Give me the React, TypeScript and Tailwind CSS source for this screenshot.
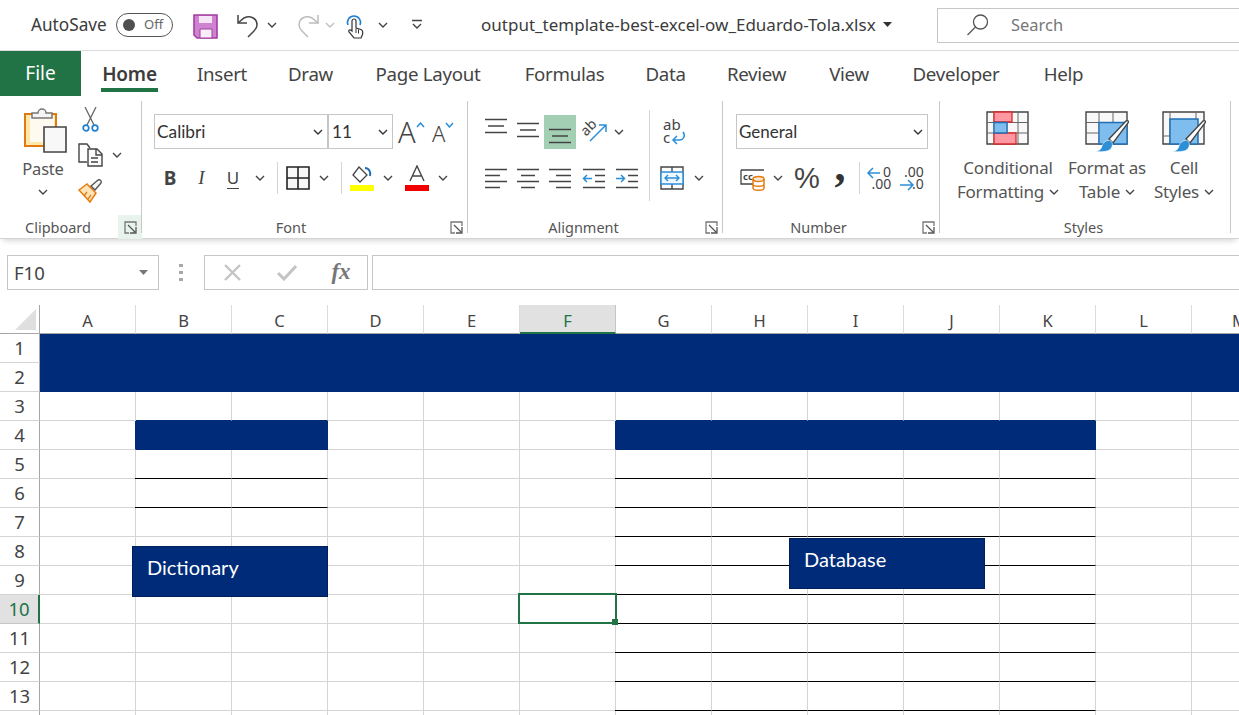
import React from "react";

const UI = { fontFamily: '"Noto Sans", "Open Sans", sans-serif' };
const NAVY = "bg-[#002b78]";

function Chev({ c = "#444", s = 10 }: { c?: string; s?: number }) {
  return (
    <svg width={s} height={s} viewBox="0 0 10 10" className="shrink-0">
      <path d="M1 3l4 4 4-4" fill="none" stroke={c} strokeWidth="1.4" />
    </svg>
  );
}

function Slot({ w, children }: { w: number; children?: React.ReactNode }) {
  return (
    <div className="flex h-full shrink-0 items-center justify-center" style={{ width: w }}>
      {children}
    </div>
  );
}

function Launcher({ hl }: { hl?: boolean }) {
  return (
    <div className={`absolute bottom-[-1px] right-0 flex h-[24px] w-[24px] items-center justify-center ${hl ? "bg-[#e8f3ed]" : ""}`}>
      <svg width="13" height="13" viewBox="0 0 13 13" fill="none" stroke="#555" strokeWidth="1.3">
        <path d="M12 5V1H1v11h4" stroke="#777" />
        <path d="M4 4l7 7M12 6v6H6" />
      </svg>
    </div>
  );
}

function Group({ w, label, launcher, hl, children, labelOffset = 0 }: { w: number; label: string; launcher?: boolean; hl?: boolean; children: React.ReactNode; labelOffset?: number }) {
  return (
    <section className="relative flex h-full shrink-0 flex-col" style={{ width: w }}>
      <div className="flex-1">{children}</div>
      <div className="flex h-[20px] items-center justify-center text-[14.5px] text-[#555]" style={{ paddingRight: labelOffset }}>
        {label}
      </div>
      {launcher && <Launcher hl={hl} />}
      <div className="absolute bottom-[5px] right-0 top-[5px] w-px bg-[#c8c8c8]" />
    </section>
  );
}

function HAlign({ kind }: { kind: "l" | "c" | "r" }) {
  const d =
    kind === "l"
      ? "M1 3.5H23M1 9.5H16M1 15.5H23M1 21.5H16"
      : kind === "c"
      ? "M1 3.5H23M5 9.5H19M1 15.5H23M5 21.5H19"
      : "M1 3.5H23M8 9.5H23M1 15.5H23M8 21.5H23";
  return (
    <svg width="24" height="24" viewBox="0 0 24 24" fill="none" stroke="#444" strokeWidth="1.3">
      <path d={d} />
    </svg>
  );
}

function VAlign({ top }: { top: number }) {
  return (
    <svg width="24" height="30" viewBox="0 0 24 30" fill="none" stroke="#444" strokeWidth="1.4">
      <path d={`M1 ${top + 0.5}H23M4 ${top + 7}H20M1 ${top + 13.5}H23`} />
    </svg>
  );
}

function Indent({ dir }: { dir: "in" | "out" }) {
  return (
    <svg width="24" height="24" viewBox="0 0 24 24" fill="none" strokeWidth="1.3">
      <path d="M1 3.5H23M1 21.5H23" stroke="#444" />
      <path d="M13 9.5H23M13 15.5H23" stroke="#444" />
      {dir === "out" ? (
        <path d="M10 12.5H1.5M5 9l-3.5 3.5L5 16" stroke="#2b8fd8" strokeWidth="1.5" />
      ) : (
        <path d="M1 12.5H9.5M6 9l3.5 3.5L6 16" stroke="#2b8fd8" strokeWidth="1.5" />
      )}
    </svg>
  );
}

function TopBar() {
  return (
    <header className="flex h-[51px] items-center border-b border-[#dcdcdc] bg-white pl-[31px] text-[17.2px] text-[#3b3b3b] [&>*]:shrink-0">
      <span className="w-[85px]">AutoSave</span>
      <div className="flex h-[24px] w-[57px] items-center rounded-full border border-[#555] pl-[6px]">
        <span className="h-[12px] w-[12px] rounded-full bg-[#505050]" />
        <span className="ml-[9px] text-[13px] text-[#666]">Off</span>
      </div>
      <svg className="ml-[20px] mt-[3px]" width="25" height="25" viewBox="0 0 25 25">
        <path d="M1 1h23v23H4l-3-3z" fill="#cf82cf" stroke="#a33ea3" strokeWidth="1.6" />
        <path d="M6 2h13v7H6z" fill="#f5e6f5" />
        <path d="M7 15h12v9H7z" fill="#f7eef7" stroke="#a33ea3" strokeWidth="1" />
      </svg>
      <svg className="ml-[18px] mt-[2px]" width="26" height="26" viewBox="0 0 26 26" fill="none" stroke="#444" strokeWidth="1.5">
        <path d="M2 2v8h9" />
        <path d="M2 10l6-5c6-3 13 0 13 7 0 3-2 5-3 6l-6 6" />
      </svg>
      <span className="ml-[5px]"><Chev /></span>
      <svg className="ml-[17px] mt-[2px]" width="26" height="26" viewBox="0 0 26 26" fill="none" stroke="#bcbcbc" strokeWidth="1.5">
        <path d="M24 2v8h-9" />
        <path d="M24 10l-6-5C12 2 5 5 5 12c0 3 2 5 3 6l6 6" />
      </svg>
      <span className="ml-[5px]"><Chev c="#c0c0c0" /></span>
      <svg className="ml-[10px] mt-[2px]" width="20" height="26" viewBox="0 0 20 26" fill="none">
        <path d="M3 12a6.5 6.5 0 1 1 12 0" stroke="#1f7fd0" strokeWidth="1.6" />
        <path d="M7 8a2 2 0 0 1 4 0v7l5 1.5c2 1 2 3 1.5 5L16 25H9l-5-6c-1-2 1-3 3-1z" fill="#fff" stroke="#333" strokeWidth="1.2" />
        <path d="M11 16v4M13.5 16.5v4" stroke="#333" />
      </svg>
      <span className="ml-[13px]"><Chev /></span>
      <svg className="ml-[23px]" width="12" height="12" viewBox="0 0 12 12" fill="none" stroke="#444" strokeWidth="1.4">
        <path d="M1 1.5h10M2 5l4 4 4-4" />
      </svg>
      <span className="ml-[58px] w-[393px] whitespace-nowrap text-[17px]">output_template-best-excel-ow_Eduardo-Tola.xlsx</span>
      <svg className="ml-[9px]" width="9" height="6" viewBox="0 0 9 6"><path d="M0 0h9L4.5 5z" fill="#333" /></svg>
      <div className="ml-[45px] flex h-[35px] w-[320px] items-center border border-[#c6c6c6] pl-[28px]">
        <svg width="24" height="24" viewBox="0 0 24 24" fill="none" stroke="#555" strokeWidth="1.3">
          <circle cx="14.5" cy="9" r="7" />
          <path d="M9.5 14L1.5 22" />
        </svg>
        <span className="ml-[21px] text-[16.5px] text-[#777]">Search</span>
      </div>
    </header>
  );
}

const tabs: [string, number, number][] = [
  ["Insert", 48, 40], ["Draw", 45, 42], ["Page Layout", 106, 42], ["Formulas", 81, 43], ["Data", 41, 40], ["Review", 61, 40], ["View", 42, 41], ["Developer", 90, 41], ["Help", 41, 42],
];

function Tabs() {
  return (
    <nav className="flex h-[45px] items-stretch bg-white text-[19px] text-[#444]">
      <div className="flex w-[81px] items-center justify-center bg-[#217346] text-white">File</div>
      <div className="relative ml-[20px] flex w-[57px] items-center justify-center pt-px font-semibold tracking-[-0.2px] text-[#3c3c3c]">
        Home
        <div className="absolute bottom-[4px] left-0 right-0 h-[4px] bg-[#217346]" />
      </div>
      {tabs.map(([t, w, ml]) => (
        <span key={t} className="flex items-center justify-center whitespace-nowrap pt-px text-[18.7px] tracking-[-0.3px]" style={{ width: w, marginLeft: ml }}>{t}</span>
      ))}
    </nav>
  );
}

function Clipboard() {
  return (
    <Group w={142} label="Clipboard" launcher hl labelOffset={26}>
      <div className="flex pt-[11px]">
        <div className="ml-[20px] flex w-[46px] flex-col items-center">
          <svg width="44" height="46" viewBox="0 0 44 46" className="ml-[4px]">
            <path d="M2 7h31v32H2z" fill="#fde7a9" stroke="#e07a10" strokeWidth="2" />
            <path d="M7 9h24v26H7z" fill="#fffaf0" />
            <path d="M9 11V6h6a4 4 0 0 1 8 0h6v5z" fill="#f5f5f5" stroke="#777" strokeWidth="1.5" />
            <path d="M21 20h22v25H21z" fill="#f8f8f8" stroke="#444" strokeWidth="1.6" />
          </svg>
          <span className="mt-[4px] text-[16.5px] leading-[24px] tracking-[-0.2px] text-[#555]">Paste</span>
          <span className="mt-[6px]"><Chev /></span>
        </div>
        <div className="ml-[12px] flex flex-col">
          <svg className="ml-[4px]" width="17" height="26" viewBox="0 0 17 26" fill="none">
            <path d="M3 0l9 18M14 0L5 18" stroke="#666" strokeWidth="1.3" />
            <circle cx="4" cy="21" r="2.8" stroke="#1f7fd0" strokeWidth="1.7" />
            <circle cx="13" cy="21" r="2.8" stroke="#1f7fd0" strokeWidth="1.7" />
          </svg>
          <div className="mt-[10px] flex items-center">
            <svg width="25" height="24" viewBox="0 0 25 24" fill="none" stroke="#444" strokeWidth="1.4">
              <path d="M9 19H1V1h8l3 4" />
              <path d="M10 6h9l5 5v12H10z" fill="#fafafa" />
              <path d="M18 6v6h6M13 15h7M13 19h7" />
            </svg>
            <span className="ml-[9px]"><Chev /></span>
          </div>
          <svg className="mt-[11px]" width="25" height="26" viewBox="0 0 25 26" fill="none">
            <path d="M1 12l8-6 9 9-6 9z" fill="#fde3b5" stroke="#e57c12" strokeWidth="1.5" />
            <path d="M6 18l3-4M10 21l3-4" stroke="#e57c12" strokeWidth="1.3" />
            <path d="M13 8l7-6c2-1 4 1 3 3l-6 7z" fill="#f5f5f5" stroke="#555" strokeWidth="1.4" />
          </svg>
        </div>
      </div>
    </Group>
  );
}

function Font() {
  const box = "flex h-[35px] items-center justify-between border border-[#c6c6c6] pr-[4px] text-[17.3px] text-[#333]";
  return (
    <Group w={326} label="Font" launcher labelOffset={28}>
      <div className="pl-[12px] pt-[18px]">
        <div className="flex h-[35px] items-center">
          <div className={`${box} w-[174px] pl-[2px]`} style={{ fontFamily: "Lato, sans-serif" }}>Calibri<Chev c="#333" /></div>
          <div className={`${box} w-[65px] pl-[3px]`} style={{ fontFamily: "Lato, sans-serif" }}>11<Chev c="#333" /></div>
          <div className="ml-[5px] flex w-[27px] items-start">
            <span className="text-[29px] font-light leading-[26px] text-[#444]">A</span>
            <svg width="9" height="6" viewBox="0 0 9 6" className="mt-[3px]" fill="none" stroke="#2b8fd8" strokeWidth="1.5"><path d="M1 5l3.5-4L8 5" /></svg>
          </div>
          <div className="ml-[7px] flex w-[24px] items-start">
            <span className="mt-[2px] text-[22px] font-light leading-[24px] text-[#444]">A</span>
            <svg width="9" height="6" viewBox="0 0 9 6" className="mt-[3px]" fill="none" stroke="#2b8fd8" strokeWidth="1.5"><path d="M1 1l3.5 4L8 1" /></svg>
          </div>
        </div>
        <div className="mt-[13px] flex h-[32px] items-center text-[#444]">
          <Slot w={32}><span className="text-[19px] font-bold">B</span></Slot>
          <Slot w={31}><span className="text-[19px] italic" style={{ fontFamily: '"Liberation Serif", serif' }}>I</span></Slot>
          <Slot w={32}><span className="border-b border-[#444] text-[17px] leading-[20px]">U</span></Slot>
          <Slot w={22}><Chev /></Slot>
          <Slot w={12}><div className="h-[32px] w-px bg-[#d4d4d4]" /></Slot>
          <Slot w={29}>
            <svg width="24" height="24" viewBox="0 0 24 24" fill="#f8f8f8" stroke="#222" strokeWidth="1.6"><path d="M1 1h22v22H1zM12 1v22M1 12h22" /></svg>
          </Slot>
          <Slot w={24}><Chev /></Slot>
          <Slot w={10}><div className="h-[32px] w-px bg-[#d4d4d4]" /></Slot>
          <Slot w={32}>
            <svg width="24" height="26" viewBox="0 0 24 26">
              <path d="M9 2l8 8-7 7-7-7z" fill="#fff" stroke="#444" strokeWidth="1.3" />
              <path d="M15 3c4 0 6 4 5 8" fill="none" stroke="#1f6fb5" strokeWidth="2" />
              <rect x="0" y="20" width="24" height="6" fill="#ffff00" />
            </svg>
          </Slot>
          <Slot w={20}><Chev /></Slot>
          <Slot w={38}>
            <svg width="24" height="26" viewBox="0 0 24 26" fill="none">
              <path d="M5 16L12 1l7 15M8 11h8" stroke="#444" strokeWidth="1.4" />
              <rect x="0" y="20" width="24" height="6" fill="#f00000" />
            </svg>
          </Slot>
          <Slot w={14}><Chev /></Slot>
        </div>
      </div>
    </Group>
  );
}

function Alignment() {
  return (
    <Group w={255} label="Alignment" launcher labelOffset={24}>
      <div className="flex pl-[12px] pt-[19px]">
        <div className="w-[169px]">
          <div className="flex h-[34px] items-center">
            <Slot w={32}><VAlign top={2} /></Slot>
            <Slot w={32}><VAlign top={6} /></Slot>
            <div className="flex h-[34px] w-[32px] items-center justify-center bg-[#a3cfb5]"><VAlign top={12} /></div>
            <Slot w={36}>
              <svg width="26" height="26" viewBox="0 0 26 26" fill="none" className="overflow-visible">
                <path d="M9 22L25 6M18 6h7v7" stroke="#2b8fd8" strokeWidth="1.5" />
                <text x="8" y="13" textAnchor="middle" fontSize="14" fill="#444" transform="rotate(-45 8 9)" style={{ fontFamily: "Noto Sans" }}>ab</text>
              </svg>
            </Slot>
            <Slot w={13}><Chev /></Slot>
          </div>
          <div className="mt-[13px] flex h-[32px]">
            <Slot w={32}><HAlign kind="l" /></Slot>
            <Slot w={32}><HAlign kind="c" /></Slot>
            <Slot w={32}><HAlign kind="r" /></Slot>
            <Slot w={36}><Indent dir="out" /></Slot>
            <Slot w={30}><Indent dir="in" /></Slot>
          </div>
        </div>
        <div className="mt-[-5px] h-[91px] w-px bg-[#d4d4d4]" />
        <div className="ml-[10px] flex flex-col">
          <div className="flex h-[34px] items-center pl-[3px]">
            <svg width="24" height="30" viewBox="0 0 24 30" fill="none" className="overflow-visible">
              <text x="0" y="13" fontSize="15" fill="#444" style={{ fontFamily: "Noto Sans" }}>ab</text>
              <text x="0" y="26" fontSize="15" fill="#444" style={{ fontFamily: "Noto Sans" }}>c</text>
              <path d="M20 15c3 4 0 8-3 8H10M14 19l-4 4 4 4" stroke="#2b8fd8" strokeWidth="1.5" />
            </svg>
          </div>
          <div className="mt-[13px] flex h-[32px] items-center">
            <svg width="24" height="24" viewBox="0 0 24 24" fill="none" strokeWidth="1.4">
              <path d="M1 1h22v22H1zM12 1v5M12 18v5" stroke="#444" />
              <path d="M1 6h22v12H1z" stroke="#2b8fd8" fill="#f0f8ff" />
              <path d="M5 12h14M8 9l-3 3 3 3M16 9l3 3-3 3" stroke="#2b8fd8" />
            </svg>
            <span className="ml-[10px]"><Chev /></span>
          </div>
        </div>
      </div>
    </Group>
  );
}

function NumberGroup() {
  return (
    <Group w={217} label="Number" launcher labelOffset={26}>
      <div className="pl-[13px] pt-[18px]">
        <div className="flex h-[35px] w-[192px] items-center justify-between border border-[#c6c6c6] pl-[2px] pr-[4px] text-[17px] text-[#333]" style={{ fontFamily: "Lato, sans-serif" }}>General<Chev c="#333" /></div>
        <div className="mt-[13px] flex h-[32px] items-center">
          <Slot w={34}>
            <svg width="26" height="26" viewBox="0 0 26 26" fill="none">
              <path d="M1 5h23M1 5v14h12" stroke="#444" strokeWidth="1.3" />
              <text x="3" y="15" fontSize="9.5" fontWeight="700" fill="#444" style={{ fontFamily: "Noto Sans" }}>cc</text>
              <ellipse cx="18.5" cy="14" rx="5.5" ry="2.5" fill="#fde7c8" stroke="#e57c12" strokeWidth="1.5" />
              <path d="M13 14v9c0 3 11 3 11 0v-9M13 19c0 3 11 3 11 0" stroke="#e57c12" strokeWidth="1.5" />
            </svg>
          </Slot>
          <Slot w={16}><Chev /></Slot>
          <Slot w={42}><span className="text-[29px] leading-none text-[#444]" style={{ fontFamily: '"Liberation Sans", sans-serif' }}>%</span></Slot>
          <Slot w={24}><span className="mb-[22px] text-[44px] font-bold leading-none text-[#333]" style={{ fontFamily: '"Liberation Serif", serif' }}>,</span></Slot>
          <Slot w={14}><div className="h-[32px] w-px bg-[#d4d4d4]" /></Slot>
          <Slot w={26}>
            <svg width="26" height="26" viewBox="0 0 26 26" fill="none" className="overflow-visible">
              <path d="M14 8H2M7 3L2 8l5 5" stroke="#2b8fd8" strokeWidth="1.5" />
              <text x="17" y="12" fontSize="14" fill="#444" style={{ fontFamily: "Noto Sans" }}>0</text>
              <text x="5.5" y="24" fontSize="14" fill="#444" style={{ fontFamily: "Noto Sans" }}>.00</text>
            </svg>
          </Slot>
          <Slot w={40}>
            <svg width="26" height="26" viewBox="0 0 26 26" fill="none" className="overflow-visible">
              <text x="5" y="12" fontSize="14" fill="#444" style={{ fontFamily: "Noto Sans" }}>.00</text>
              <path d="M1 20h13M9 15l5 5-5 5" stroke="#2b8fd8" strokeWidth="1.5" />
              <text x="13" y="24" fontSize="14" fill="#444" style={{ fontFamily: "Noto Sans" }}>.0</text>
            </svg>
          </Slot>
        </div>
      </div>
    </Group>
  );
}

function GridIcon({ children, w = 44 }: { children: React.ReactNode; w?: number }) {
  return (
    <svg width={w} height="42" viewBox="0 0 44 42" fill="none">
      {children}
    </svg>
  );
}

function Brush() {
  return (
    <>
      <path d="M24 28L41 10c2-1 3 0 2 2L28 32z" fill="#fff" stroke="#444" strokeWidth="1.4" />
      <path d="M10 40c5 0 6-2 7-5 1-4 6-7 9-5 3 3 1 9-4 10-4 1-9 1-12 0z" fill="#2d8fd6" stroke="#fff" strokeWidth="0.6" />
    </>
  );
}

function StyleBtn({ w, icon, l1, l2 }: { w: number; icon: React.ReactNode; l1: string; l2: string }) {
  return (
    <div className="flex shrink-0 flex-col items-center" style={{ width: w }}>
      <div className="h-[45px]">{icon}</div>
      <span className="whitespace-nowrap text-[17px] leading-[24px] tracking-[-0.2px] text-[#555]">{l1}</span>
      <span className="flex items-center gap-[5px] whitespace-nowrap text-[17px] leading-[24px] tracking-[-0.2px] text-[#555]">{l2}<Chev /></span>
    </div>
  );
}

function Styles() {
  return (
    <Group w={291} label="Styles" labelOffset={4}>
      <div className="flex gap-[4px] pl-[20px] pt-[15px]">
        <StyleBtn
          w={96}
          l1="Conditional"
          l2="Formatting"
          icon={
            <GridIcon>
              <path d="M1 1h41v32H1z" fill="#f8f8f8" stroke="#444" strokeWidth="1.4" />
              <path d="M1 11.5h41M1 22h41M8 1v32M21 1v32M32 1v32" stroke="#666" />
              <path d="M8 1h18v10H8zM8 22h22v11H8z" fill="#ff98a2" stroke="#d92a2a" strokeWidth="1.3" />
              <path d="M8 11.5h13V22H8z" fill="#7fbdee" stroke="#1f6fb5" strokeWidth="1.3" />
            </GridIcon>
          }
        />
        <StyleBtn
          w={94}
          l1="Format as"
          l2="Table"
          icon={
            <GridIcon>
              <path d="M1 1h41v32H1z" fill="#f8f8f8" stroke="#444" strokeWidth="1.4" />
              <path d="M1 11.5h41M1 22h41M14 1v32M28 1v32" stroke="#666" />
              <path d="M14 11.5h28V33H14z" fill="#7fbdee" stroke="#1f6fb5" strokeWidth="1.3" />
              <Brush />
            </GridIcon>
          }
        />
        <StyleBtn
          w={52}
          l1="Cell"
          l2="Styles"
          icon={
            <GridIcon>
              <path d="M1 1h41v32H1z" fill="#f8f8f8" stroke="#444" strokeWidth="1.4" />
              <path d="M8 1v32M1 25h7M34 1v8" stroke="#666" />
              <path d="M8 8h28v25H8z" fill="#7fbdee" stroke="#1f6fb5" strokeWidth="1.5" />
              <Brush />
            </GridIcon>
          }
        />
      </div>
    </Group>
  );
}

function FormulaBar() {
  return (
    <div className="flex h-[66px] items-start bg-white pl-[7px] pt-[16px]">
      <div className="flex h-[35px] w-[152px] items-center justify-between border border-[#c6c6c6] pl-[6px] pr-[10px] text-[18.5px] text-[#444]">
        F10
        <svg width="9" height="5" viewBox="0 0 9 5"><path d="M0 0h9L4.5 5z" fill="#777" /></svg>
      </div>
      <div className="ml-[20px] mt-[9px] flex h-[17px] w-[4px] flex-col justify-between">
        <span className="h-[3px] bg-[#a8a8a8]" /><span className="h-[3px] bg-[#a8a8a8]" /><span className="h-[3px] bg-[#a8a8a8]" />
      </div>
      <div className="ml-[21px] flex h-[35px] w-[164px] items-center border border-[#c6c6c6]">
        <Slot w={55}>
          <svg width="17" height="17" viewBox="0 0 17 17" stroke="#c4c4c4" strokeWidth="2.4"><path d="M1 1l15 15M16 1L1 16" /></svg>
        </Slot>
        <Slot w={54}>
          <svg width="20" height="17" viewBox="0 0 20 17" fill="none" stroke="#c4c4c4" strokeWidth="3"><path d="M1 9l6 6L19 2" /></svg>
        </Slot>
        <Slot w={54}>
          <span className="text-[23px] font-bold italic text-[#777]" style={{ fontFamily: '"Liberation Serif", serif' }}>fx</span>
        </Slot>
      </div>
      <div className="ml-[4px] h-[35px] flex-1 border border-r-0 border-[#c6c6c6]" />
    </div>
  );
}

const COLS = "ABCDEFGHIJKLM".split("");
const ROWS = Array.from({ length: 14 }, (_, i) => i + 1);

function cellClass(r: number, ci: number) {
  const c = COLS[ci];
  const inDict = c === "B" || c === "C";
  const inDb = "GHIJK".includes(c);
  if (r <= 2) return NAVY;
  if (r === 4 && (inDict || inDb)) return NAVY;
  const right = r === 4 && (c === "A" || c === "F") ? "border-r-[#002b78]" : "border-r-[#d4d4d4]";
  let bottom = "border-b-[#d4d4d4]";
  if (r === 3 && (inDict || inDb)) bottom = "border-b-[#002b78]";
  const black = ((r === 5 || r === 6) && inDict) || (r >= 5 && r <= 13 && inDb);
  if (black) bottom = "border-b-black";
  const lead = black && (c === "B" || c === "G") ? "relative before:absolute before:bottom-[-1px] before:left-[-1px] before:h-px before:w-px before:bg-black" : "";
  return `border-b border-r ${right} ${bottom} ${lead}`;
}

function Sheet() {
  return (
    <div className="relative grid grid-cols-[40px_repeat(13,96px)] grid-rows-[29px_repeat(14,29px)] bg-white text-[#444]">
      <div className="relative border-b border-r border-[#a6a6a6]">
        <svg className="absolute left-[15px] top-[4px]" width="22" height="22" viewBox="0 0 22 22"><path d="M21 0v21H0z" fill="#dfdfdf" /></svg>
      </div>
      {COLS.map((c) => (
        <div
          key={c}
          className={`flex items-center justify-center pt-[5px] text-[16.5px] ${c === "F" ? "border-b-2 border-r border-b-[#217346] border-r-[#c6c6c6] bg-[#e1e1e1] text-[#217346]" : "border-b border-r border-b-[#a6a6a6] border-r-[#dcdcdc]"}`}
        >
          {c}
        </div>
      ))}
      {ROWS.map((r) => (
        <React.Fragment key={r}>
          <div className={`flex items-center justify-center text-[18.5px] ${r === 10 ? "border-b border-r-2 border-b-[#c6c6c6] border-r-[#217346] bg-[#e1e1e1] text-[#217346]" : "border-b border-r border-b-[#d4d4d4] border-r-[#a6a6a6]"}`}>
            {r}
          </div>
          {COLS.map((_, ci) => (
            <div key={ci} className={cellClass(r, ci)} />
          ))}
        </React.Fragment>
      ))}
      <div className="absolute left-[132px] top-[241px] flex h-[51px] w-[196px] items-start border border-[#001f5c] bg-[#002b78] pl-[14px] pt-[5px] text-[20px] leading-[30px] text-white" style={{ fontFamily: "Lato, sans-serif" }}>
        Dictionary
      </div>
      <div className="absolute left-[789px] top-[233px] flex h-[51px] w-[196px] items-start border border-[#001f5c] bg-[#002b78] pl-[14px] pt-[5px] text-[20px] leading-[30px] text-white" style={{ fontFamily: "Lato, sans-serif" }}>
        Database
      </div>
      <div className="absolute left-[518px] top-[288px] h-[31px] w-[99px] border-2 border-[#217346]">
        <div className="absolute bottom-[-3px] right-[-3px] h-[6px] w-[6px] bg-[#217346]" />
      </div>
    </div>
  );
}

export default function App() {
  return (
    <div className="h-[715px] w-[1239px] overflow-hidden bg-white" style={UI}>
      <TopBar />
      <Tabs />
      <div className="relative z-10 flex h-[143px] border-b border-[#d4d4d4] bg-white shadow-[0_5px_5px_-3px_rgba(0,0,0,0.16)]">
        <Clipboard />
        <Font />
        <Alignment />
        <NumberGroup />
        <Styles />
      </div>
      <FormulaBar />
      <Sheet />
    </div>
  );
}
